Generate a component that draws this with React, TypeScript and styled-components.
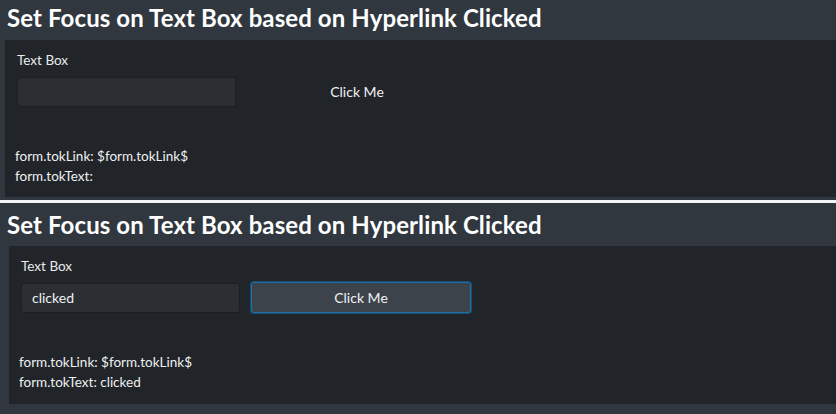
import styled, { createGlobalStyle } from "styled-components";

const GlobalStyle = createGlobalStyle`
    html, body {
        margin: 0;
        padding: 0;
        background-color: #31373e;
    }
    body {
        font-family: Lato, "Open Sans", sans-serif;
        color: #e9ecef;
    }
`;

const Page = styled.div`
    width: 836px;
    height: 414px;
    overflow: hidden;
    background-color: #31373e;
`;

const Shot = styled.section<{ top: number; height: number }>`
    height: ${(props) => props.height}px;
    padding-top: ${(props) => props.top}px;
    box-sizing: border-box;
    display: flex;
    flex-direction: column;
    overflow: hidden;
`;

const Title = styled.h2`
    margin: 0 0 0 7px;
    font-size: 24px;
    line-height: 26px;
    font-weight: 700;
    color: #ffffff;
    letter-spacing: 0.1px;
    white-space: nowrap;
`;

const Divider = styled.div`
    height: 3px;
    background-color: #f4f5f6;
`;

const Panel = styled.div<{ indent: number; gapTop: number; height: number }>`
    margin-top: ${(props) => props.gapTop}px;
    margin-left: ${(props) => props.indent}px;
    height: ${(props) => props.height}px;
    background-color: #212428;
    padding: 12px 0 0 12px;
    box-sizing: border-box;
    display: flex;
    flex-direction: column;
`;

const Label = styled.div`
    font-size: 13.5px;
    line-height: 16px;
    color: #e8eaed;
`;

const InputRow = styled.div`
    display: flex;
    gap: 11px;
    margin-top: 8px;
    align-items: center;
`;

const TextInput = styled.div`
    width: 219px;
    height: 30px;
    box-sizing: border-box;
    background-color: #2b2f34;
    border: 1px solid #1c1f22;
    border-radius: 3px;
    padding: 0 10px;
    font-size: 14px;
    line-height: 28px;
    color: #eef0f2;
`;

const LinkButton = styled.div<{ focused: boolean }>`
    width: 220px;
    height: 31px;
    box-sizing: border-box;
    display: flex;
    align-items: center;
    justify-content: center;
    font-size: 14px;
    color: #f0f2f4;
    border-radius: 3px;
    background-color: ${(props) => (props.focused ? "#3c434b" : "transparent")};
    border: 1px solid ${(props) => (props.focused ? "#1f6fa6" : "transparent")};
    box-shadow: ${(props) => (props.focused ? "0 0 0 1px rgba(24, 112, 170, 0.55)" : "none")};
`;

const Tokens = styled.div`
    margin-top: 39px;
    margin-left: -2px;
    display: flex;
    flex-direction: column;
    font-size: 13.5px;
    line-height: 20px;
    color: #eef0f2;
`;

type Snap = {
    indent: number;
    top: number;
    height: number;
    panelGap: number;
    panelHeight: number;
    value: string;
    focused: boolean;
};

const snaps: Snap[] = [
    { indent: 5, top: 5, height: 200, panelGap: 9, panelHeight: 157, value: "", focused: false },
    { indent: 9, top: 9, height: 211, panelGap: 8, panelHeight: 158, value: "clicked", focused: true },
];

function Snapshot({ snap }: { snap: Snap }) {
    return (
        <Shot top={snap.top} height={snap.height}>
            <Title>Set Focus on Text Box based on Hyperlink Clicked</Title>
            <Panel indent={snap.indent} gapTop={snap.panelGap} height={snap.panelHeight}>
                <Label>Text Box</Label>
                <InputRow>
                    <TextInput>{snap.value}</TextInput>
                    <LinkButton focused={snap.focused}>Click Me</LinkButton>
                </InputRow>
                <Tokens>
                    <span>form.tokLink: $form.tokLink$</span>
                    <span>form.tokText: {snap.value}</span>
                </Tokens>
            </Panel>
        </Shot>
    );
}

function App() {
    return (
        <Page>
            <GlobalStyle />
            <Snapshot snap={snaps[0]} />
            <Divider />
            <Snapshot snap={snaps[1]} />
        </Page>
    );
}

export default App;
